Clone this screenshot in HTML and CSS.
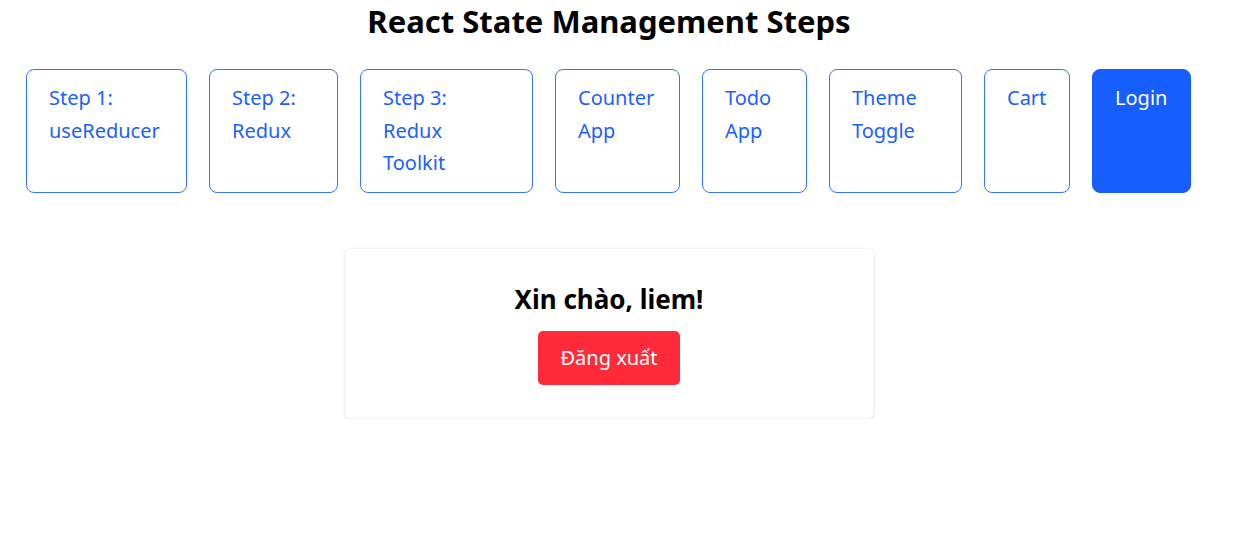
FILE: index.html
```html
<!DOCTYPE html>
<html lang="vi">
<head>
<meta charset="utf-8">
<title>React State Management Steps</title>
<link rel="stylesheet" href="styles.css">
</head>
<body>
<div class="app">
  <h2 class="title">React State Management Steps</h2>
  <nav class="steps">
    <button class="step-btn w-1">Step 1: useReducer</button>
    <button class="step-btn w-2">Step 2: Redux</button>
    <button class="step-btn w-3">Step 3: Redux Toolkit</button>
    <button class="step-btn w-4">Counter App</button>
    <button class="step-btn w-5">Todo App</button>
    <button class="step-btn w-6">Theme Toggle</button>
    <button class="step-btn w-7">Cart</button>
    <button class="step-btn w-8 active">Login</button>
  </nav>
  <section class="card">
    <h3 class="greeting">Xin chào, liem!</h3>
    <button class="logout">Đăng xuất</button>
  </section>
</div>
</body>
</html>
```
FILE: styles.css
```css
* { box-sizing: border-box; }
body {
  margin: 0;
  background: #fff;
  color: #000;
  font-family: "Noto Sans", sans-serif;
}
.app {
  width: 1218px;
}
.title {
  margin: 0;
  padding-top: 4px;
  text-align: center;
  font-size: 31px;
  font-weight: 700;
  line-height: 34px;
}
.steps {
  display: flex;
  align-items: stretch;
  gap: 22px;
  padding-left: 26px;
  margin-top: 31px;
}
.step-btn {
  flex: 0 0 auto;
  display: flex;
  align-items: flex-start;
  font-family: inherit;
  font-size: 20px;
  line-height: 32.5px;
  text-align: left;
  padding: 12px 22px;
  color: #1a5fff;
  background: #fff;
  border: 1px solid #3576ff;
  border-radius: 8px;
  cursor: pointer;
}
.step-btn.active {
  background: #175eff;
  border-color: #175eff;
  color: #fff;
}
.w-1 { width: 161px; }
.w-2 { width: 129px; }
.w-3 { width: 173px; padding-right: 34px; }
.w-4 { width: 125px; }
.w-5 { width: 105px; }
.w-6 { width: 133px; }
.w-7 { width: 86px; }
.w-8 { width: 99px; }
.card {
  width: 529px;
  margin: 55px auto 0;
  padding: 35px 20px 33px;
  text-align: center;
  background: #fff;
  border: 1px solid #f4f4f4;
  border-radius: 6px;
  box-shadow: 0 2px 4px rgba(0, 0, 0, 0.1);
}
.greeting {
  margin: 0 0 16px;
  font-size: 26px;
  font-weight: 700;
  line-height: 31px;
}
.logout {
  font-family: inherit;
  font-size: 20px;
  line-height: 30px;
  padding: 12px 22px;
  color: #fff;
  background: #ff2b3a;
  border: 0;
  border-radius: 5px;
  cursor: pointer;
}
```
